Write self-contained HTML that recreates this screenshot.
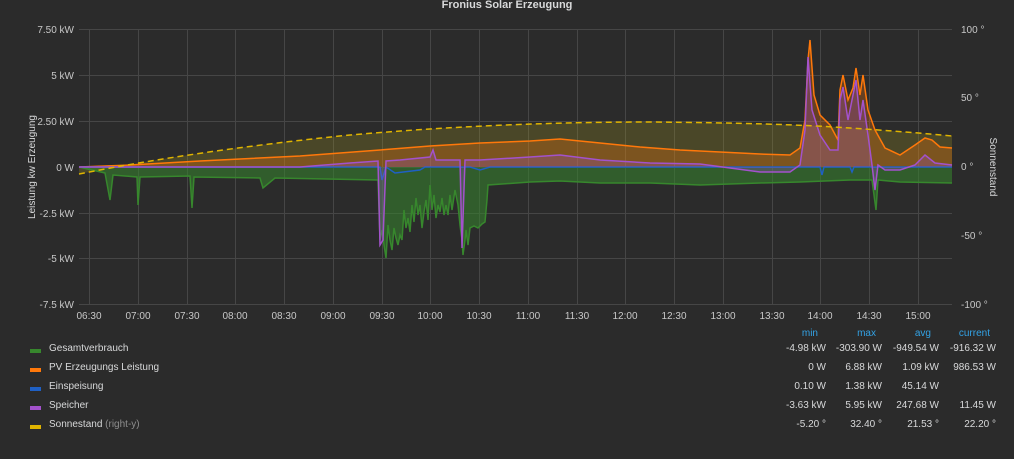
<!DOCTYPE html>
<html><head><meta charset="utf-8"><style>
html,body{margin:0;padding:0;background:#2b2b2b;width:1014px;height:459px;overflow:hidden;font-family:"Liberation Sans",sans-serif;color:#d8d9da}
svg text{font-family:"Liberation Sans",sans-serif}
.lg{position:absolute;font-size:10px;color:#d8d9da}
.sw{position:absolute;left:30px;width:11px;height:4px}
.num{position:absolute;font-size:10px;text-align:right;width:70px}
.hd{color:#33a2e5}
</style></head><body>
<svg width="1014" height="320" style="position:absolute;left:0;top:0">
<text x="507" y="8" fill="#d8d9da" font-size="11" font-weight="bold" text-anchor="middle">Fronius Solar Erzeugung</text>
<g stroke="#464646" stroke-width="1">
<line x1="79" y1="29.5" x2="952" y2="29.5"/><line x1="79" y1="75.5" x2="952" y2="75.5"/><line x1="79" y1="121.5" x2="952" y2="121.5"/><line x1="79" y1="167.5" x2="952" y2="167.5"/><line x1="79" y1="213.5" x2="952" y2="213.5"/><line x1="79" y1="258.5" x2="952" y2="258.5"/><line x1="79" y1="304.5" x2="952" y2="304.5"/>
<line x1="89.5" y1="29" x2="89.5" y2="304"/><line x1="138.5" y1="29" x2="138.5" y2="304"/><line x1="187.5" y1="29" x2="187.5" y2="304"/><line x1="235.5" y1="29" x2="235.5" y2="304"/><line x1="284.5" y1="29" x2="284.5" y2="304"/><line x1="333.5" y1="29" x2="333.5" y2="304"/><line x1="382.5" y1="29" x2="382.5" y2="304"/><line x1="430.5" y1="29" x2="430.5" y2="304"/><line x1="479.5" y1="29" x2="479.5" y2="304"/><line x1="528.5" y1="29" x2="528.5" y2="304"/><line x1="577.5" y1="29" x2="577.5" y2="304"/><line x1="625.5" y1="29" x2="625.5" y2="304"/><line x1="674.5" y1="29" x2="674.5" y2="304"/><line x1="723.5" y1="29" x2="723.5" y2="304"/><line x1="772.5" y1="29" x2="772.5" y2="304"/><line x1="820.5" y1="29" x2="820.5" y2="304"/><line x1="869.5" y1="29" x2="869.5" y2="304"/><line x1="918.5" y1="29" x2="918.5" y2="304"/>
</g>
<g fill="#c8c8c8" font-size="10" text-anchor="end">
<text x="74" y="33">7.50 kW</text><text x="74" y="79">5 kW</text><text x="74" y="125">2.50 kW</text><text x="74" y="171">0 W</text><text x="74" y="217">-2.5 kW</text><text x="74" y="262">-5 kW</text><text x="74" y="308">-7.5 kW</text>
</g>
<g fill="#c8c8c8" font-size="10">
<text x="961" y="33">100 °</text><text x="961" y="101">50 °</text><text x="961" y="170">0 °</text><text x="961" y="239">-50 °</text><text x="961" y="308">-100 °</text>
</g>
<g fill="#c8c8c8" font-size="10" text-anchor="middle">
<text x="89" y="319">06:30</text><text x="138" y="319">07:00</text><text x="187" y="319">07:30</text><text x="235" y="319">08:00</text><text x="284" y="319">08:30</text><text x="333" y="319">09:00</text><text x="382" y="319">09:30</text><text x="430" y="319">10:00</text><text x="479" y="319">10:30</text><text x="528" y="319">11:00</text><text x="577" y="319">11:30</text><text x="625" y="319">12:00</text><text x="674" y="319">12:30</text><text x="723" y="319">13:00</text><text x="772" y="319">13:30</text><text x="820" y="319">14:00</text><text x="869" y="319">14:30</text><text x="918" y="319">15:00</text>
</g>
<text transform="translate(35,167) rotate(-90)" fill="#d8d9da" font-size="10" text-anchor="middle">Leistung kw Erzeugung</text>
<text transform="translate(990,167) rotate(90)" fill="#d8d9da" font-size="10" text-anchor="middle">Sonnenstand</text>
<path d="M79,174 Q200,150 350,135 Q500,122 650,122 Q780,123 850,128 Q910,132 952,136 L952,167 L79,167 Z" fill="#a89a20" fill-opacity="0.25"/>
<path d="M79,167 L130,165 L200,161 L300,156 L380,150 L430,146 L480,143 L530,141 L560,139 L600,143 L640,147 L680,150 L720,152 L760,154 L790,155 L800,148 L805,120 L808,60 L810,40 L814,95 L820,115 L830,125 L838,140 L840,90 L843,75 L848,100 L853,88 L856,68 L860,95 L863,75 L868,110 L875,130 L885,148 L900,155 L915,145 L925,138 L932,140 L940,147 L952,148 L952,167 Z" fill="#ff780a" fill-opacity="0.28"/>
<path d="M79,167 L130,165 L200,161 L300,156 L380,150 L430,146 L480,143 L530,141 L560,139 L600,143 L640,147 L680,150 L720,152 L760,154 L790,155 L800,148 L805,120 L808,60 L810,40 L814,95 L820,115 L830,125 L838,140 L840,90 L843,75 L848,100 L853,88 L856,68 L860,95 L863,75 L868,110 L875,130 L885,148 L900,155 L915,145 L925,138 L932,140 L940,147 L952,148" fill="none" stroke="#ff780a" stroke-width="1.5"/>
<path d="M79,167 L105,173 L110,200 L113,175 L137,177 L138,205 L140,177 L190,176 L192,208 L194,177 L260,178 L263,188 L275,178 L378,180 L380,240 L382,230 L384,245 L386,258 L388,225 L390,240 L392,250 L394,228 L396,238 L398,245 L400,235 L402,240 L404,210 L406,228 L408,218 L410,232 L412,205 L414,222 L416,198 L418,215 L420,205 L422,228 L424,212 L426,200 L428,220 L430,185 L432,210 L434,195 L436,218 L438,205 L440,212 L442,198 L444,215 L446,205 L448,215 L450,195 L452,210 L455,190 L458,205 L460,225 L462,240 L463,255 L465,240 L466,230 L468,245 L470,228 L474,226 L478,228 L482,224 L485,222 L487,200 L488,185 L530,182 L560,181 L600,183 L650,183 L700,185 L760,183 L800,182 L850,180 L872,180 L876,210 L878,180 L900,182 L952,183 L952,167 Z" fill="#37872d" fill-opacity="0.55"/>
<path d="M79,167 L105,173 L110,200 L113,175 L137,177 L138,205 L140,177 L190,176 L192,208 L194,177 L260,178 L263,188 L275,178 L378,180 L380,240 L382,230 L384,245 L386,258 L388,225 L390,240 L392,250 L394,228 L396,238 L398,245 L400,235 L402,240 L404,210 L406,228 L408,218 L410,232 L412,205 L414,222 L416,198 L418,215 L420,205 L422,228 L424,212 L426,200 L428,220 L430,185 L432,210 L434,195 L436,218 L438,205 L440,212 L442,198 L444,215 L446,205 L448,215 L450,195 L452,210 L455,190 L458,205 L460,225 L462,240 L463,255 L465,240 L466,230 L468,245 L470,228 L474,226 L478,228 L482,224 L485,222 L487,200 L488,185 L530,182 L560,181 L600,183 L650,183 L700,185 L760,183 L800,182 L850,180 L872,180 L876,210 L878,180 L900,182 L952,183" fill="none" stroke="#37872d" stroke-width="1.5"/>
<path d="M79,167 L380,167 L382,180 L386,167 L395,173 L420,170 L425,167 L470,167 L480,170 L490,167 L820,167 L822,175 L824,167 L850,167 L852,172 L854,167 L952,167" fill="none" stroke="#1f60c4" stroke-width="1.5"/>
<path d="M79,167 L300,167 L350,163 L378,161 L380,245 L383,240 L386,161 L400,160 L430,157 L433,150 L436,160 L460,160 L462,248 L465,160 L480,160 L530,157 L560,155 L600,160 L650,163 L700,164 L760,172 L790,172 L800,165 L805,130 L808,57 L812,110 L820,135 L830,150 L838,150 L840,100 L843,87 L848,120 L853,95 L856,80 L860,120 L863,100 L868,135 L872,165 L875,190 L878,165 L885,170 L900,170 L915,165 L925,155 L935,163 L952,165 L952,167 L79,167 Z" fill="#a352cc" fill-opacity="0.25"/>
<path d="M79,167 L300,167 L350,163 L378,161 L380,245 L383,240 L386,161 L400,160 L430,157 L433,150 L436,160 L460,160 L462,248 L465,160 L480,160 L530,157 L560,155 L600,160 L650,163 L700,164 L760,172 L790,172 L800,165 L805,130 L808,57 L812,110 L820,135 L830,150 L838,150 L840,100 L843,87 L848,120 L853,95 L856,80 L860,120 L863,100 L868,135 L872,165 L875,190 L878,165 L885,170 L900,170 L915,165 L925,155 L935,163 L952,165" fill="none" stroke="#a352cc" stroke-width="1.5"/>
<path d="M79,174 Q200,150 350,135 Q500,122 650,122 Q780,123 850,128 Q910,132 952,136" fill="none" stroke="#e0b400" stroke-width="1.5" stroke-dasharray="6,4"/>
</svg>
<div class="sw" style="top:349px;background:#37872d"></div><div class="lg" style="left:49px;top:343px">Gesamtverbrauch</div>
<div class="sw" style="top:368px;background:#ff780a"></div><div class="lg" style="left:49px;top:362px">PV Erzeugungs Leistung</div>
<div class="sw" style="top:387px;background:#1f60c4"></div><div class="lg" style="left:49px;top:381px">Einspeisung</div>
<div class="sw" style="top:406px;background:#a352cc"></div><div class="lg" style="left:49px;top:400px">Speicher</div>
<div class="sw" style="top:425px;background:#e0b400"></div><div class="lg" style="left:49px;top:419px">Sonnestand <span style="color:#8e8e8e">(right-y)</span></div>
<div class="num hd" style="left:748px;top:328px">min</div><div class="num hd" style="left:806px;top:328px">max</div><div class="num hd" style="left:861px;top:328px">avg</div><div class="num hd" style="left:920px;top:328px">current</div>
<div class="num" style="left:756px;top:343px">-4.98 kW</div><div class="num" style="left:812px;top:343px">-303.90 W</div><div class="num" style="left:869px;top:343px">-949.54 W</div><div class="num" style="left:926px;top:343px">-916.32 W</div>
<div class="num" style="left:756px;top:362px">0 W</div><div class="num" style="left:812px;top:362px">6.88 kW</div><div class="num" style="left:869px;top:362px">1.09 kW</div><div class="num" style="left:926px;top:362px">986.53 W</div>
<div class="num" style="left:756px;top:381px">0.10 W</div><div class="num" style="left:812px;top:381px">1.38 kW</div><div class="num" style="left:869px;top:381px">45.14 W</div>
<div class="num" style="left:756px;top:400px">-3.63 kW</div><div class="num" style="left:812px;top:400px">5.95 kW</div><div class="num" style="left:869px;top:400px">247.68 W</div><div class="num" style="left:926px;top:400px">11.45 W</div>
<div class="num" style="left:756px;top:419px">-5.20 °</div><div class="num" style="left:812px;top:419px">32.40 °</div><div class="num" style="left:869px;top:419px">21.53 °</div><div class="num" style="left:926px;top:419px">22.20 °</div>
</body></html>
